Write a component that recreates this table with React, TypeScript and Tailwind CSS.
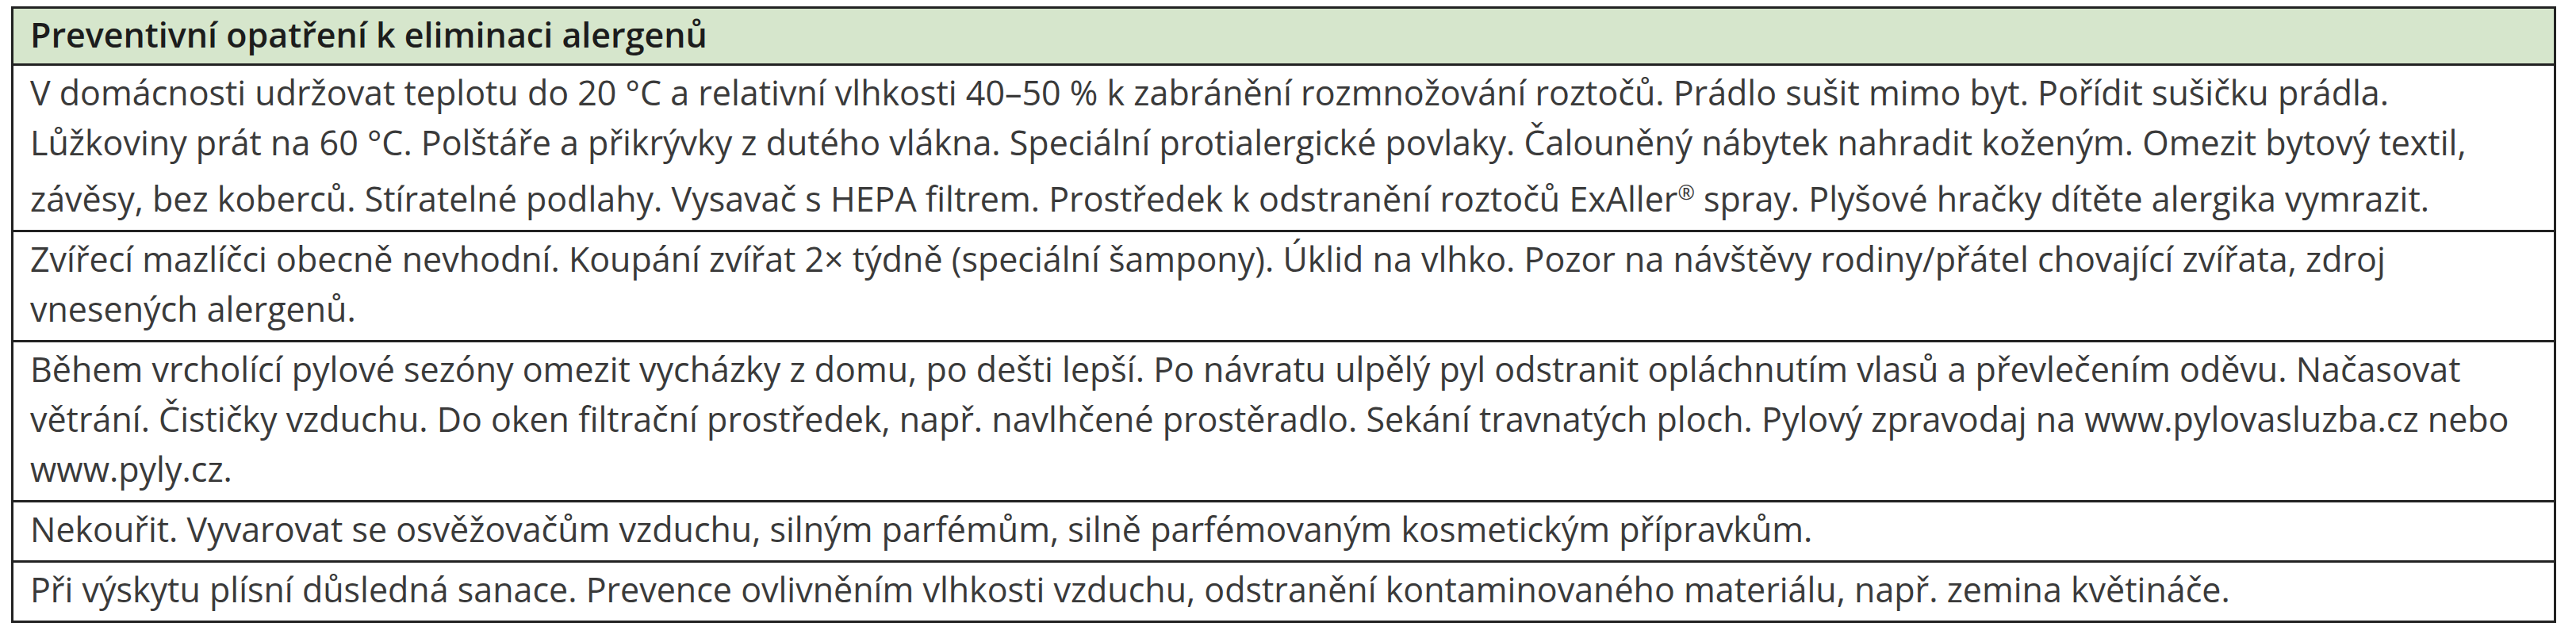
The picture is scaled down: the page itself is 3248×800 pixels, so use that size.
// Tabulka preventivních opatření — jednoduchá tabulka s hlavičkou a pěti řádky.
// Zalomení řádků je pevně dané (podle předlohy), proto whitespace-nowrap.

const rows: string[][] = [
  [
    "V domácnosti udržovat teplotu do 20 °C a relativní vlhkosti 40–50 % k zabránění rozmnožování roztočů. Prádlo sušit mimo byt. Pořídit sušičku prádla.",
    "Lůžkoviny prát na 60 °C. Polštáře a přikrývky z dutého vlákna. Speciální protialergické povlaky. Čalouněný nábytek nahradit koženým. Omezit bytový textil,",
    "závěsy, bez koberců. Stíratelné podlahy. Vysavač s HEPA filtrem. Prostředek k odstranění roztočů ExAller® spray. Plyšové hračky dítěte alergika vymrazit.",
  ],
  [
    "Zvířecí mazlíčci obecně nevhodní. Koupání zvířat 2× týdně (speciální šampony). Úklid na vlhko. Pozor na návštěvy rodiny/přátel chovající zvířata, zdroj",
    "vnesených alergenů.",
  ],
  [
    "Během vrcholící pylové sezóny omezit vycházky z domu, po dešti lepší. Po návratu ulpělý pyl odstranit opláchnutím vlasů a převlečením oděvu. Načasovat",
    "větrání. Čističky vzduchu. Do oken filtrační prostředek, např. navlhčené prostěradlo. Sekání travnatých ploch. Pylový zpravodaj na www.pylovasluzba.cz nebo",
    "www.pyly.cz.",
  ],
  ["Nekouřit. Vyvarovat se osvěžovačům vzduchu, silným parfémům, silně parfémovaným kosmetickým přípravkům."],
  [
    "Při výskytu plísní důsledná sanace. Prevence ovlivněním vlhkosti vzduchu, odstranění kontaminovaného materiálu, např. zemina květináče.",
  ],
]

// ® v předloze je menší a zvednutý
function Line({ text }: { text: string }) {
  const parts = text.split("®")
  if (parts.length === 1) return <>{text}</>
  return (
    <>
      {parts[0]}
      <span className="text-[0.6em] align-[0.6em]">®</span>
      {parts[1]}
    </>
  )
}

export default function App() {
  return (
    <div className="bg-white w-[3248px] h-[800px] pt-[8px] pl-[14px] font-['Open_Sans','Liberation_Sans',sans-serif]">
      <div className="w-[3209px] border-[3px] border-[#222]">
        <div className="bg-[#d6e6cc] pl-[21px] pt-[1px] pb-[5px] text-[43px] leading-[63px] font-semibold [font-stretch:93%] text-[#1c1c1c] whitespace-nowrap">
          Preventivní opatření k eliminaci alergenů
        </div>
        {rows.map((lines, i) => (
          <div
            key={i}
            className="border-t-[3px] border-[#222] pl-[21px] pt-[2px] pb-[8px] text-[43px] leading-[63px] [font-stretch:96%] text-[#3a3a3a] whitespace-nowrap"
          >
            {lines.map((l, j) => (
              <div key={j}>
                <Line text={l} />
              </div>
            ))}
          </div>
        ))}
      </div>
    </div>
  )
}
